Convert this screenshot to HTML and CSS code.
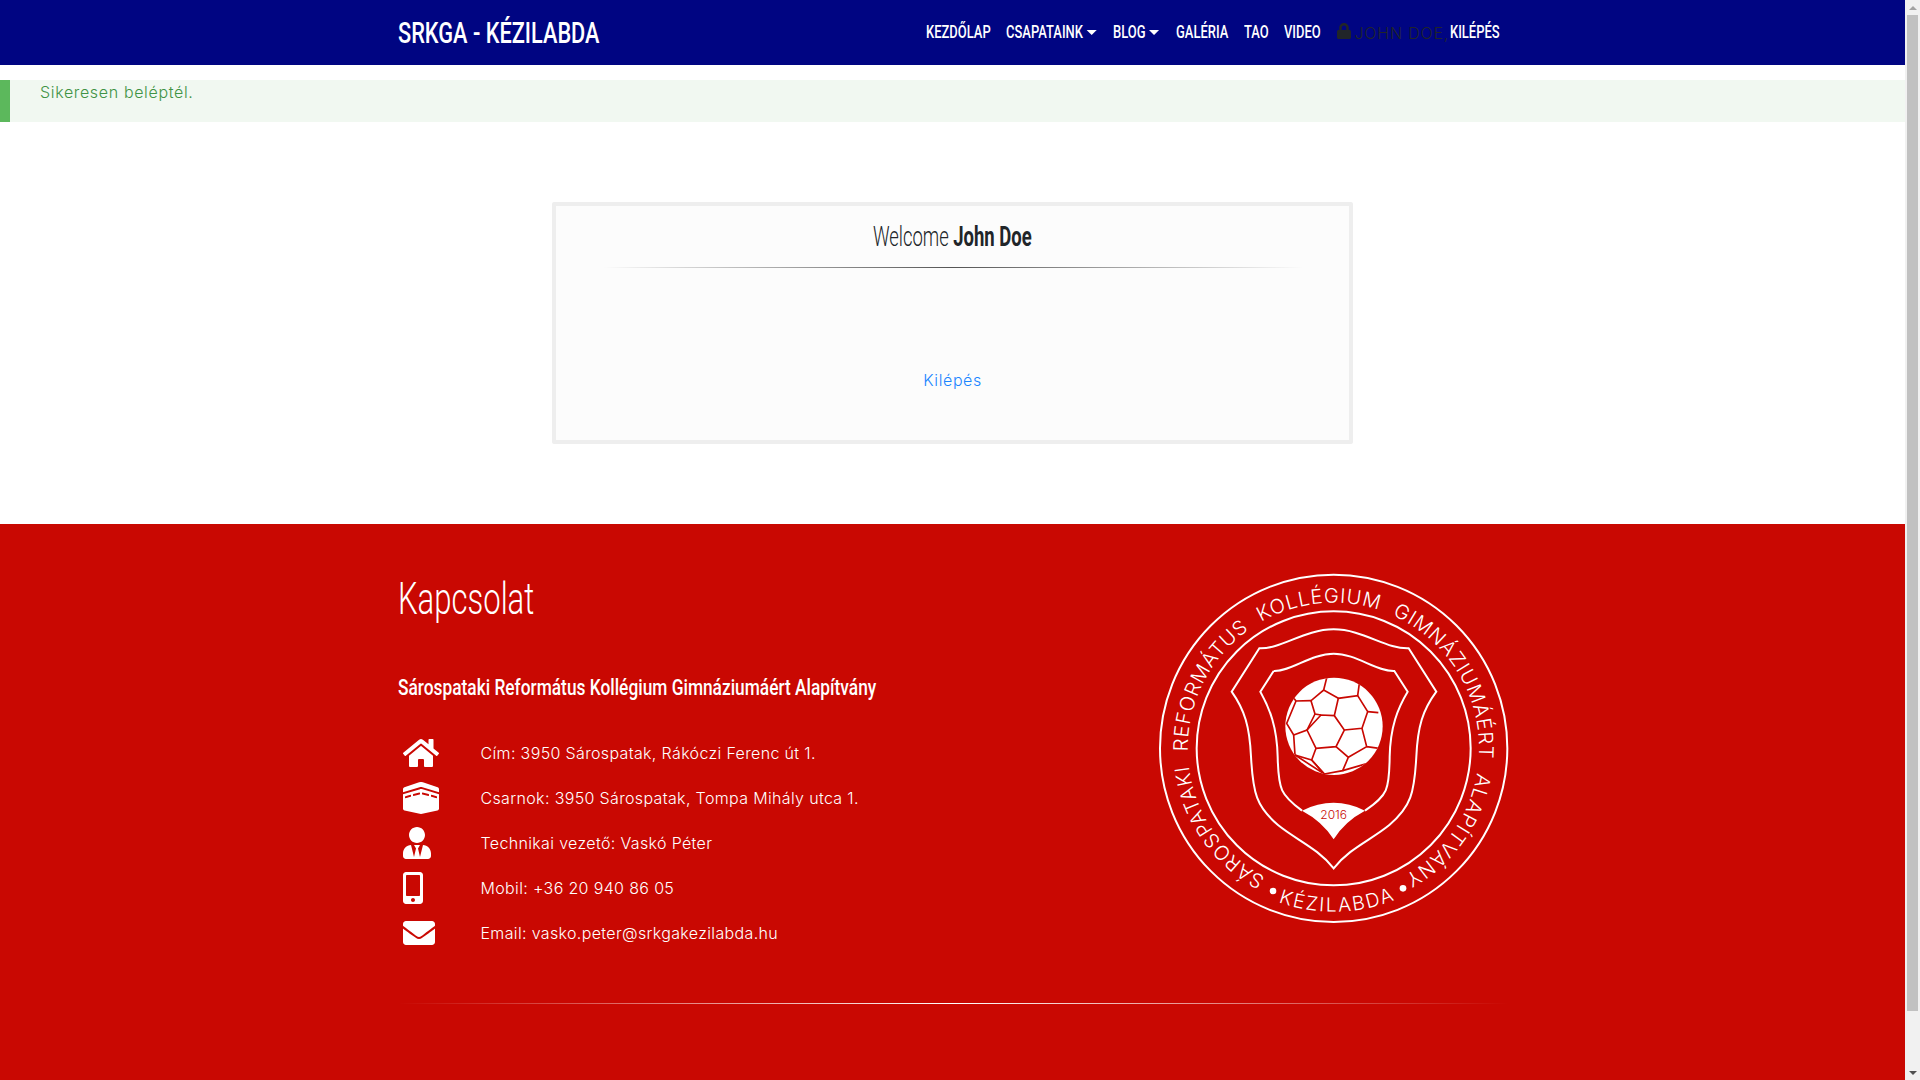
FILE: index.html
```html
<!DOCTYPE html>
<html lang="hu">

<head>
    <meta charset="utf-8">
    <title>SRKGA - Kézilabda</title>
    <link rel="stylesheet" href="styles.css">
</head>

<body>
    <div class="page">
        <header class="navbar">
            <div class="container nav-inner">
                <a class="brand" href="#"><span class="cond">SRKGA - KÉZILABDA</span></a>
                <nav class="nav">
                    <a class="nav-link" href="#"><span class="cond">Kezdőlap</span></a>
                    <a class="nav-link" href="#"><span class="cond caret">Csapataink</span></a>
                    <a class="nav-link" href="#"><span class="cond caret">Blog</span></a>
                    <a class="nav-link" href="#"><span class="cond">Galéria</span></a>
                    <a class="nav-link" href="#"><span class="cond">TAO</span></a>
                    <a class="nav-link" href="#"><span class="cond">Video</span></a>
                    <span class="nav-user">
                        <svg class="lock" viewBox="0 0 448 512"><path d="M400 224h-24v-72C376 68.2 307.8 0 224 0S72 68.2 72 152v72H48c-26.5 0-48 21.5-48 48v192c0 26.5 21.5 48 48 48h352c26.5 0 48-21.5 48-48V272c0-26.5-21.5-48-48-48zm-104 0H152v-72c0-39.7 32.3-72 72-72s72 32.3 72 72v72z"/></svg>
                        JOHN DOE,
                    </span>
                    <a class="nav-link" href="#"><span class="cond">Kilépés</span></a>
                </nav>
            </div>
        </header>

        <div class="alert">Sikeresen beléptél.</div>

        <main class="content">
            <section class="card">
                <h2 class="welcome"><span class="cond">Welcome <b>John Doe</b></span></h2>
                <div class="fade-line"></div>
                <a class="card-link" href="#">Kilépés</a>
            </section>
        </main>

        <footer class="footer">
            <div class="container">
                <div class="footer-row">
                    <div class="contact">
                        <h1 class="contact-title"><span class="cond">Kapcsolat</span></h1>
                        <h3 class="contact-org"><span class="cond">Sárospataki Református Kollégium Gimnáziumáért Alapítvány</span></h3>
                        <ul class="contact-list">
                            <li>
                                <span class="ico"><svg width="36" height="32" viewBox="0 0 576 512"><path d="M280.37 148.26L96 300.11V464a16 16 0 0 0 16 16l112.06-.29a16 16 0 0 0 15.92-16V368a16 16 0 0 1 16-16h64a16 16 0 0 1 16 16v95.64a16 16 0 0 0 16 16.05L464 480a16 16 0 0 0 16-16V300L295.67 148.26a12.19 12.19 0 0 0-15.3 0zM571.6 251.47L488 182.56V44.05a12 12 0 0 0-12-12h-56a12 12 0 0 0-12 12v72.61L318.47 43a48 48 0 0 0-61 0L4.34 251.47a12 12 0 0 0-1.6 16.9l25.5 31A12 12 0 0 0 45.15 301l235.22-193.74a12.19 12.19 0 0 1 15.3 0L530.9 301a12 12 0 0 0 16.9-1.6l25.5-31a12 12 0 0 0-1.7-16.93z"/></svg></span>
                                Cím: 3950 Sárospatak, Rákóczi Ferenc út 1.
                            </li>
                            <li>
                                <span class="ico"><svg width="36" height="32" viewBox="0 0 576 512"><path d="M554.12 83.51L318.36 4.93a95.95 95.95 0 0 0-60.71 0L21.88 83.51A32.006 32.006 0 0 0 0 113.87v49.01l265.02-79.51c15.03-4.5 30.92-4.5 45.98 0l265 79.51v-49.01c0-13.77-8.81-26-21.88-30.36zm-279.9 30.53L0 196.13v228.38c0 15 10.42 27.98 25.06 31.24l242.12 53.8a95.937 95.937 0 0 0 41.65 0l242.12-53.8c14.64-3.25 25.06-16.24 25.06-31.24V196.13l-274.2-82.26c-9.04-2.72-18.76-2.72-27.81 0zM128 230.11c0 3.61-2.41 6.77-5.89 7.72l-80 21.82C37.02 261.03 32 257.2 32 251.93v-16.58c0-3.61 2.41-6.77 5.89-7.72l80-21.82c5.09-1.39 10.11 2.44 10.11 7.72v16.58zm144-39.28c0 3.61-2.41 6.77-5.89 7.72l-96 26.18c-5.09 1.39-10.11-2.44-10.11-7.72v-16.58c0-3.61 2.41-6.77 5.89-7.72l96-26.18c5.09-1.39 10.11 2.44 10.11 7.72v16.58zm176 22.7c0-5.28 5.02-9.11 10.11-7.72l80 21.82c3.48.95 5.89 4.11 5.89 7.72v16.58c0 5.28-5.02 9.11-10.11 7.72l-80-21.82a7.997 7.997 0 0 1-5.89-7.72v-16.58zm-144-39.27c0-5.28 5.02-9.11 10.11-7.72l96 26.18c3.48.95 5.89 4.11 5.89 7.72v16.57c0 5.28-5.02 9.11-10.11 7.72l-96-26.18a7.995 7.995 0 0 1-5.89-7.72v-16.57z"/></svg></span>
                                Csarnok: 3950 Sárospatak, Tompa Mihály utca 1.
                            </li>
                            <li>
                                <span class="ico"><svg width="28" height="32" viewBox="0 0 448 512"><path d="M224 256c70.7 0 128-57.3 128-128S294.7 0 224 0 96 57.3 96 128s57.3 128 128 128zm95.8 32.6L272 480l-32-136 32-56h-96l32 56-32 136-47.8-191.4C56.9 292 0 350.3 0 422.4V464c0 26.5 21.5 48 48 48h352c26.5 0 48-21.5 48-48v-41.6c0-72.1-56.9-130.4-128.2-133.8z"/></svg></span>
                                Technikai vezető: Vaskó Péter
                            </li>
                            <li>
                                <span class="ico"><svg width="20" height="32" viewBox="0 0 320 512"><path d="M272 0H48C21.5 0 0 21.5 0 48v416c0 26.5 21.5 48 48 48h224c26.5 0 48-21.5 48-48V48c0-26.5-21.5-48-48-48zM160 480c-17.7 0-32-14.3-32-32s14.3-32 32-32 32 14.3 32 32-14.3 32-32 32zm112-108c0 6.6-5.4 12-12 12H60c-6.6 0-12-5.4-12-12V60c0-6.6 5.4-12 12-12h200c6.6 0 12 5.4 12 12v312z"/></svg></span>
                                Mobil: +36 20 940 86 05
                            </li>
                            <li>
                                <span class="ico"><svg width="32" height="32" viewBox="0 0 512 512"><path d="M502.3 190.8c3.9-3.1 9.7-.2 9.7 4.7V400c0 26.5-21.5 48-48 48H48c-26.5 0-48-21.5-48-48V195.6c0-5 5.7-7.8 9.7-4.7 22.4 17.4 52.1 39.5 154.1 113.6 21.1 15.4 56.7 47.8 92.2 47.6 35.7.3 72-32.8 92.3-47.6 102-74.1 131.6-96.3 154-113.7zM256 320c23.2.4 56.6-29.2 73.4-41.4 132.7-96.3 142.8-104.7 173.4-128.7 5.8-4.5 9.2-11.5 9.2-18.9v-19c0-26.5-21.5-48-48-48H48C21.5 64 0 85.5 0 112v19c0 7.4 3.4 14.3 9.2 18.9 30.6 23.9 40.7 32.4 173.4 128.7 16.8 12.2 50.2 41.8 73.4 41.4z"/></svg></span>
                                Email: vasko.peter@srkgakezilabda.hu
                            </li>
                        </ul>
                    </div>

                    <svg class="crest" viewBox="0 0 1170 1170">
                        <defs>
                            <path id="arc-top" d="M374 952A437 437 0 1 1 756 964"/>
                            <path id="arc-bottom" d="M412 1026A490 490 0 0 0 808 998"/>
                            <clipPath id="ball-clip"><circle cx="339" cy="229" r="146"/></clipPath>
                        </defs>
                        <circle class="ring" cx="578" cy="565" r="521"/>
                        <circle class="ring" cx="578" cy="565" r="411"/>
                        <text class="crest-text"><textPath href="#arc-top">SÁROSPATAKI REFORMÁTUS KOLLÉGIUM GIMNÁZIUMÁÉRT ALAPÍTVÁNY</textPath></text>
                        <text class="crest-text crest-low"><textPath href="#arc-bottom">KÉZILABDA</textPath></text>
                        <circle class="dot" cx="396" cy="993" r="10"/>
                        <circle class="dot" cx="786" cy="985" r="10"/>
                        <path class="ring" d="M355 265C420 268 490 208 578 208C666 208 736 268 803 265L886 395C845 450 830 500 826 590C820 700 810 740 745 795C690 840 625 865 578 925C531 865 466 840 411 795C346 740 336 700 330 590C326 500 311 450 272 395Z"/>
                        <path class="ring" d="M398 333C450 335 510 281 578 281C646 281 706 335 760 333L800 395C770 445 748 500 746 590C745 690 740 705 672 752M483 752C420 705 412 690 410 590C408 500 386 445 358 395L398 333"/>
                        <path class="dot" d="M483 752Q578 705 672 752Q610 785 578 838Q545 785 483 752Z"/>
                        <text class="crest-year" x="578" y="777">2016</text>
                        <g transform="translate(240 270)">
                            <circle class="dot" cx="339" cy="229" r="146"/>
                            <g class="ball-lines" clip-path="url(#ball-clip)">
                                <path d="M258 240L300 195L340 197L370 240L345 290L285 295Z"/>
                                <path d="M340 197L352 145L410 137L440 185L423 235L370 240"/>
                                <path d="M300 195L282 192L270 152L308 120L352 145"/>
                                <path d="M270 152L225 153L197 220L218 255L258 240L282 192"/>
                                <path d="M218 255L222 315L272 330L285 295"/>
                                <path d="M222 315L310 372L272 330M310 372L365 362L382 322L345 290"/>
                                <path d="M272 330L310 372M382 322L437 290L423 235M437 290L480 296M365 362L440 340"/>
                                <path d="M440 185L472 188M410 137L415 100M308 120L318 80M225 153L215 140"/>
                            </g>
                        </g>
                    </svg>
                </div>
                <div class="footer-line"></div>
            </div>
        </footer>
    </div>

    <div class="scrollbar">
        <div class="sb-btn"><i class="sb-up"></i></div>
        <div class="sb-thumb"></div>
        <div class="sb-btn sb-end"><i class="sb-down"></i></div>
    </div>
</body>

</html>
```

FILE: styles.css
```css
* {
    box-sizing: border-box;
}

body {
    display: flex;
    height: 100vh;
    margin: 0;
    overflow: hidden;
    font-family: "Inter", "Liberation Sans", sans-serif;
    font-size: 16px;
    font-weight: 300;
    letter-spacing: .35px;
    color: #212529;
    background-color: #fff;
}

a {
    text-decoration: none;
}

.page {
    flex: 1;
    min-width: 0;
    overflow: hidden;
}

/* no condensed family on the box, so the heading font is squeezed */
.cond {
    display: inline-block;
    font-family: "Roboto", "Liberation Sans", sans-serif;
    letter-spacing: 0;
    white-space: nowrap;
    transform-origin: left center;
    transform: scaleX(var(--sx));
}

.container {
    width: 1140px;
    margin: 0 auto;
    padding: 0 15px;
}

.navbar {
    height: 65px;
    background-color: #000582;
}

.nav-inner {
    display: flex;
    align-items: center;
    justify-content: space-between;
    height: 100%;
}

.brand {
    --sx: .725;
    margin-top: -2px;
    font-size: 30px;
    font-weight: 500;
    color: #fff;
}

.nav {
    display: grid;
    grid-template-columns: 80px 107px 63px 68px 40px 53px 113px 58px;
    align-items: center;
}

.nav-link {
    --sx: .72;
    margin-top: -2px;
    font-size: 18px;
    font-weight: 500;
    text-transform: uppercase;
    color: #fff;
}

.caret::after {
    content: "";
    display: inline-block;
    margin-left: 5px;
    vertical-align: 3px;
    border-top: 5px solid #fff;
    border-left: 7px solid transparent;
    border-right: 7px solid transparent;
}

.nav-user {
    display: flex;
    align-items: center;
    gap: 4px;
    letter-spacing: .8px;
    white-space: nowrap;
    color: #212529;
}

.lock {
    width: 14px;
    height: 16px;
    margin-top: -4px;
    fill: #212529;
}

.alert {
    height: 42px;
    margin-top: 15px;
    padding: 2px 0 0 30px;
    border-left: 10px solid #5cb85c;
    background-color: #f1f8f1;
    letter-spacing: .65px;
    color: #3f9345;
}

.content {
    padding: 80px 0;
}

.card {
    display: flex;
    flex-direction: column;
    align-items: center;
    width: 801px;
    height: 242px;
    margin: 0 auto;
    border: 4px solid #eee;
    border-radius: 2px;
    background-color: #fcfcfc;
}

.welcome {
    --sx: .66;
    margin: 10px 0 0;
    font-size: 28px;
    font-weight: 300;
    line-height: 40px;
}

.welcome .cond {
    transform-origin: center;
}

.welcome b {
    font-weight: 700;
}

.fade-line {
    width: 700px;
    height: 1px;
    margin-top: 10px;
    background: linear-gradient(to right, transparent, #555 50%, transparent);
}

.card-link {
    margin-top: 102px;
    letter-spacing: .6px;
    color: #1a85ff;
}

.footer {
    height: 700px;
    padding-top: 40px;
    background-color: #c90802;
    color: #fff;
}

.footer-row {
    display: flex;
    justify-content: space-between;
}

.contact-title {
    --sx: .69;
    margin: 0;
    font-size: 45px;
    font-weight: 300;
    line-height: 68px;
}

.contact-org {
    --sx: .77;
    margin: 38px 0 0;
    font-size: 22.5px;
    font-weight: 500;
    line-height: 32px;
}

.contact-list {
    margin: 27px 0 0;
    padding: 0;
    list-style: none;
}

.contact-list li {
    display: flex;
    align-items: center;
    height: 45px;
}

.ico {
    display: flex;
    width: 83px;
    padding-left: 5px;
}

.ico svg {
    fill: #fff;
}

.crest {
    flex: none;
    width: 390px;
    height: 390px;
    margin: -4px -23px 0 0;
    fill: #fff;
}

.ring {
    fill: none;
    stroke: #fff;
    stroke-width: 6;
}

.dot {
    fill: #fff;
}

.crest-text {
    font-family: "Inter", sans-serif;
    font-size: 60px;
    font-weight: 300;
    letter-spacing: 2.5px;
    word-spacing: 22px;
    fill: #fff;
}

.crest-low {
    font-size: 58px;
    letter-spacing: 5.5px;
}

.crest-year {
    font-family: "Inter", sans-serif;
    font-size: 36px;
    font-weight: 300;
    letter-spacing: 0;
    text-anchor: middle;
    fill: #c90802;
}

.ball-lines path {
    fill: none;
    stroke: #c90802;
    stroke-width: 5;
}

.footer-line {
    height: 1px;
    margin-top: 48px;
    background: linear-gradient(to right, transparent, #fff 50%, transparent);
}

.scrollbar {
    display: flex;
    flex: none;
    flex-direction: column;
    width: 15px;
    background-color: #f1f1f1;
}

.sb-btn {
    display: flex;
    align-items: center;
    justify-content: center;
    height: 15px;
}

.sb-end {
    margin-top: auto;
}

.sb-up {
    border-bottom: 4px solid #a3a3a3;
    border-left: 4px solid transparent;
    border-right: 4px solid transparent;
}

.sb-down {
    border-top: 4px solid #505050;
    border-left: 4px solid transparent;
    border-right: 4px solid transparent;
}

.sb-thumb {
    height: 996px;
    margin: 0 2px;
    background-color: #c1c1c1;
}
```
